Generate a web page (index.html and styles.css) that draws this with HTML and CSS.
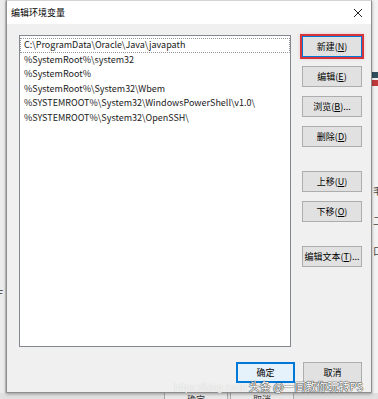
FILE: index.html
```
<!DOCTYPE html>
<html lang="zh-CN">
<head>
    <meta charset="UTF-8">
    <title>编辑环境变量</title>
    <link rel="stylesheet" href="styles.css">
</head>
<body>
    <div class="desktop">
        <div class="side side-left">
            <span class="behind-text">F</span>
        </div>
        <div class="dialog">
            <div class="titlebar">
                <span class="title">编辑环境变量</span>
                <svg class="close" width="10" height="10" viewBox="0 0 10 10">
                    <path d="M1 1 L9 9 M9 1 L1 9" stroke="#222" stroke-width="1" fill="none"/>
                </svg>
            </div>
            <div class="content">
                <div class="list">
                    <div class="item focused">C:\ProgramData\Oracle\Java\javapath</div>
                    <div class="item">%SystemRoot%\system32</div>
                    <div class="item">%SystemRoot%</div>
                    <div class="item">%SystemRoot%\System32\Wbem</div>
                    <div class="item">%SYSTEMROOT%\System32\WindowsPowerShell\v1.0\</div>
                    <div class="item">%SYSTEMROOT%\System32\OpenSSH\</div>
                </div>
                <div class="actions">
                    <button class="btn marked">新建(<u>N</u>)</button>
                    <button class="btn">编辑(<u>E</u>)</button>
                    <button class="btn">浏览(<u>B</u>)...</button>
                    <button class="btn">删除(<u>D</u>)</button>
                    <button class="btn group">上移(<u>U</u>)</button>
                    <button class="btn">下移(<u>O</u>)</button>
                    <button class="btn group">编辑文本(<u>T</u>)...</button>
                </div>
            </div>
            <div class="footer">
                <button class="btn default">确定</button>
                <button class="btn">取消</button>
            </div>
            <div class="watermark">
                <span class="url">https://blog.csdn</span>
                <span class="brand">头条 @一同教你玩转PS</span>
            </div>
        </div>
        <div class="side side-right">
            <div class="band dark"></div>
            <div class="band red"></div>
            <span class="glyph">毛</span>
            <span class="glyph">二</span>
            <span class="glyph">口</span>
        </div>
    </div>
    <div class="bottom-strip">
        <span class="ghost-btn">确定</span>
        <span class="ghost-btn">取消</span>
    </div>
</body>
</html>
```
FILE: styles.css
```
body {
    margin: 0;
    width: 378px;
    height: 399px;
    overflow: hidden;
    background: #e6e6e6;
    font-family: "Noto Sans CJK SC", "Noto Sans", sans-serif;
    color: #000;
}
.desktop {
    display: flex;
    height: 393px;
}
.side {
    width: 6px;
    background: #ececec;
    overflow: hidden;
}
.side-left {
    border-right: 1px solid #cfcfcf;
    width: 5px;
    display: flex;
    flex-direction: column;
    justify-content: flex-end;
}
.behind-text {
    font-size: 11px;
    margin-left: -3px;
    margin-bottom: 92px;
    color: #333;
}
.side-right {
    display: flex;
    flex-direction: column;
    background: #f3f3f3;
}
.band {
    height: 6px;
}
.band.dark {
    margin-top: 72px;
    background: #2f4f5c;
}
.band.red {
    margin-top: 2px;
    background: #c0393b;
}
.glyph {
    font-size: 10px;
    margin-left: 1px;
    color: #444;
    margin-top: 100px;
    line-height: 10px;
}
.glyph + .glyph {
    margin-top: 20px;
}
.dialog {
    width: 365px;
    background: #f0f0f0;
    border: 1px solid #8f8f8f;
    border-top-color: #d4d4d4;
    box-shadow: 0 1px 3px rgba(0, 0, 0, 0.35);
    display: flex;
    flex-direction: column;
    position: relative;
}
.titlebar {
    height: 23px;
    background: #fff;
    display: flex;
    align-items: center;
    justify-content: space-between;
    padding: 0 8px 0 4px;
}
.title {
    font-size: 9px;
}
.content {
    display: flex;
    padding: 11px 9px 0 12px;
    gap: 10px;
}
.list {
    width: 270px;
    height: 308px;
    background: #fff;
    border: 1px solid #828790;
    padding-top: 2px;
    box-sizing: content-box;
}
.item {
    font-size: 9px;
    line-height: 14.6px;
    padding-left: 4px;
    white-space: nowrap;
    color: #1a1a1a;
}
.item.focused {
    outline: 1px dotted #999;
    outline-offset: -1px;
}
.actions {
    display: flex;
    flex-direction: column;
    gap: 9px;
    padding-top: 1px;
    padding-left: 1px;
}
.btn {
    width: 60px;
    height: 21px;
    padding: 0;
    font-family: "Noto Sans CJK SC", sans-serif;
    font-size: 9px;
    background: #e1e1e1;
    border: 1px solid #adadad;
    color: #000;
}
.btn.group {
    margin-top: 15px;
}
.btn.marked {
    border-color: #0078d7;
    outline: 2px solid #d6343c;
    outline-offset: 0;
    box-shadow: 0 0 3px 2px rgba(230, 120, 130, 0.35);
}
.footer {
    display: flex;
    justify-content: flex-end;
    gap: 8px;
    padding: 15px 9px 0 0;
}
.footer .btn {
    width: 59px;
}
.btn.default {
    border: 2px solid #0078d7;
    background: #e5f1fb;
}
.watermark {
    position: absolute;
    right: 8px;
    bottom: -2px;
    display: flex;
    align-items: baseline;
    gap: 2px;
}
.url {
    font-family: "Liberation Sans", sans-serif;
    font-size: 10px;
    color: rgba(255, 255, 255, 0.85);
    text-shadow: 0 0 1px #bbb;
}
.brand {
    font-size: 11px;
    color: #fff;
    text-shadow: 0 0 1px #333, 0 0 1px #333, 0 0 1px #333;
}
.bottom-strip {
    height: 6px;
    background: #e0e0e0;
    display: flex;
    gap: 2px;
    padding-left: 164px;
    overflow: hidden;
}
.ghost-btn {
    width: 62px;
    height: 12px;
    border-left: 1px solid #aaa;
    border-right: 1px solid #aaa;
    font-size: 9px;
    line-height: 14px;
    text-align: center;
    color: #333;
    background: #e8e8e8;
}
```
